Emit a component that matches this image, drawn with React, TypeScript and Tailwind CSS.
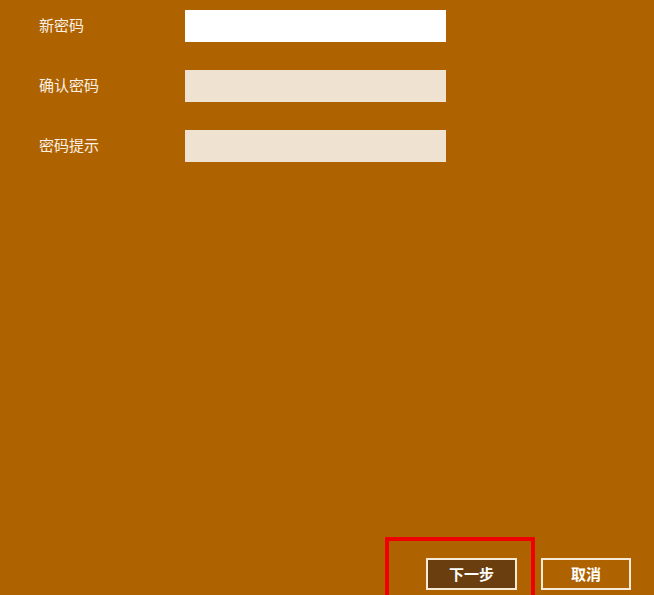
import { useState } from 'react'

const labels = ['新密码', '确认密码', '密码提示']

export default function App() {
  const [values, setValues] = useState(['', '', ''])

  return (
    <div
      className="h-[595px] w-full bg-[#ae6300] flex flex-col overflow-hidden"
      style={{ fontFamily: '"Noto Sans CJK SC", "Noto Sans", sans-serif' }}
    >
      {/* Form */}
      <div className="flex flex-col gap-7 pt-[10px] pl-[39px]">
        {labels.map((label, i) => (
          <div key={label} className="flex items-center h-8">
            <span className="w-[146px] pb-[4px] text-[15px] leading-none text-[#fbf0e4]">{label}</span>
            <input
              type="password"
              value={values[i]}
              onChange={e => setValues(v => v.map((x, j) => (j === i ? e.target.value : x)))}
              className={`w-[261px] h-8 outline-none px-2 text-sm ${i === 0 ? 'bg-white' : 'bg-[#f0e2d1]'}`}
            />
          </div>
        ))}
      </div>

      {/* Footer */}
      <div className="mt-auto flex justify-end gap-6 pr-[23px] pb-[5px]">
        <div className="relative">
          <button className="w-[91px] h-8 border-2 border-[#f7ead8] bg-[#6a3e0e] text-white text-[15px] font-bold">
            下一步
          </button>
          <span className="absolute left-[-41px] top-[-21px] w-[150px] h-[70px] border-4 border-[#f00000] pointer-events-none" />
        </div>
        <button className="w-[90px] h-8 border-2 border-[#f7ead8] text-white text-[15px] font-bold">
          取消
        </button>
      </div>
    </div>
  )
}
